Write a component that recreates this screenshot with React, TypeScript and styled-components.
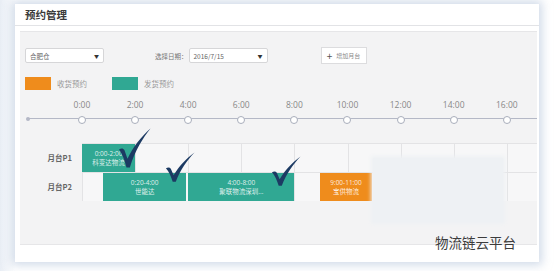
import React from "react";
import styled, { createGlobalStyle } from "styled-components";

const HOUR = 26.56;
const HOURS = ["0:00", "2:00", "4:00", "6:00", "8:00", "10:00", "12:00", "14:00", "16:00"];

interface Booking {
  start: number;
  end: number;
  time: string;
  name: string;
  kind: "in" | "out";
}

const docks: { name: string; bookings: Booking[] }[] = [
  {
    name: "月台P1",
    bookings: [{ start: 0, end: 2, time: "0:00-2:00", name: "科变达物流", kind: "out" }],
  },
  {
    name: "月台P2",
    bookings: [
      { start: 0.8, end: 3.92, time: "0:20-4:00", name: "世能达", kind: "out" },
      { start: 4, end: 8, time: "4:00-8:00", name: "聚联物流深圳...", kind: "out" },
      { start: 8.96, end: 10.92, time: "9:00-11:00", name: "宝供物流", kind: "in" },
    ],
  },
];

const checks = [
  { x: 118, y: 128, w: 33, h: 41 },
  { x: 165, y: 152, w: 30, h: 31 },
  { x: 271, y: 156, w: 30, h: 31 },
];

function Check({ x, y, w, h }: { x: number; y: number; w: number; h: number }) {
  return (
    <CheckMark style={{ left: x, top: y, width: w, height: h }} viewBox="0 0 32 40" preserveAspectRatio="none">
      <path d="M1 21 C3 19.5 5 19.5 6.2 21.5 L9.2 30 C15 18 22 9 31.5 0.5 C24 10 16.5 22 11.5 38.5 L8.2 38.5 C6.5 31.5 4.2 25.5 1 21 Z" />
    </CheckMark>
  );
}

export default function App() {
  return (
    <>
      <GlobalStyle />
      <Page>
        <Card>
          <TitleBar>预约管理</TitleBar>
          <Panel>
            <Toolbar>
              <Select width={79}>
                <span>合肥仓</span>
                <Arrow>▼</Arrow>
              </Select>
              <FieldLabel>选择日期：</FieldLabel>
              <Select width={79}>
                <span>2016/7/15</span>
                <Arrow>▼</Arrow>
              </Select>
              <AddButton>
                <Plus>+</Plus>增加月台
              </AddButton>
            </Toolbar>
            <Legend>
              <Swatch kind="in" />
              <LegendText>收货预约</LegendText>
              <Swatch kind="out" />
              <LegendText>发货预约</LegendText>
            </Legend>
            <Axis>
              {HOURS.map((h) => (
                <Tick key={h}>
                  <TickLabel>{h}</TickLabel>
                  <TickDot />
                </Tick>
              ))}
            </Axis>
            <Rows>
              {docks.map((dock) => (
                <Row key={dock.name}>
                  <DockName>{dock.name}</DockName>
                  <Track>
                    {HOURS.map((h) => (
                      <Cell key={h} />
                    ))}
                    {dock.bookings.map((b) => (
                      <Block
                        key={b.time}
                        kind={b.kind}
                        style={{ left: b.start * HOUR, width: (b.end - b.start) * HOUR }}
                      >
                        <span>{b.time}</span>
                        <span>{b.name}</span>
                      </Block>
                    ))}
                  </Track>
                </Row>
              ))}
            </Rows>
          </Panel>
        </Card>
        {checks.map((c, i) => (
          <Check key={i} {...c} />
        ))}
        <Haze />
        <Watermark>物流链云平台</Watermark>
      </Page>
    </>
  );
}

const GlobalStyle = createGlobalStyle`
  html, body {
    margin: 0;
    background: #ffffff;
  }
  body {
    font-family: "Open Sans", "Noto Sans CJK SC", sans-serif;
    color: #555;
  }
`;

const Page = styled.div`
  position: relative;
  width: 554px;
  height: 271px;
  padding: 4px 15px 0 15px;
  box-sizing: border-box;
  background: linear-gradient(90deg, #e9eef5 0px, #ffffff 16px);
  overflow: hidden;
`;

const Card = styled.div`
  display: flex;
  flex-direction: column;
  width: 524px;
  height: 258px;
  background: #ffffff;
  box-shadow: 0 0 9px 3px rgba(170, 188, 214, 0.55);
`;

const TitleBar = styled.div`
  display: flex;
  align-items: center;
  height: 21px;
  padding-left: 10px;
  border-bottom: 1px solid #e2e3e6;
  font-family: "Noto Sans CJK SC", sans-serif;
  font-size: 10.5px;
  font-weight: 700;
  color: #3a3a3a;
`;

const Panel = styled.div`
  display: flex;
  flex-direction: column;
  height: 214px;
  margin: 5px 2px 0 5px;
  background: #f3f3f4;
  border-top: 1px solid #e6e6e8;
  border-bottom: 1px solid #e6e6e8;
  box-sizing: border-box;
`;

const Toolbar = styled.div`
  display: flex;
  align-items: center;
  height: 17px;
  margin-top: 15px;
  padding-left: 5px;
`;

const Select = styled.div<{ width: number }>`
  display: flex;
  align-items: center;
  justify-content: space-between;
  width: ${(p) => p.width}px;
  height: 15px;
  padding: 0 4px;
  box-sizing: border-box;
  background: #fff;
  border: 1px solid #d6d6d8;
  border-radius: 2px;
  font-family: "Noto Sans CJK SC", sans-serif;
  font-size: 6.5px;
  color: #666;
`;

const Arrow = styled.span`
  font-size: 5px;
  color: #333;
`;

const FieldLabel = styled.span`
  margin-left: 51px;
  margin-right: 1px;
  font-family: "Noto Sans CJK SC", sans-serif;
  font-size: 6.5px;
  color: #777;
`;

const AddButton = styled.div`
  display: flex;
  align-items: center;
  justify-content: center;
  width: 46px;
  height: 17px;
  margin-left: 53px;
  box-sizing: border-box;
  background: #fff;
  border: 1px solid #dcdcde;
  font-family: "Noto Sans CJK SC", sans-serif;
  font-size: 6px;
  color: #888;
`;

const Plus = styled.span`
  margin-right: 4px;
  font-size: 10px;
  line-height: 1;
  color: #555;
`;

const Legend = styled.div`
  display: flex;
  align-items: center;
  height: 13px;
  margin-top: 13px;
  padding-left: 5px;
`;

const Swatch = styled.div<{ kind: "in" | "out" }>`
  width: 26px;
  height: 13px;
  background: ${(p) => (p.kind === "in" ? "#ef8c1c" : "#30a893")};
`;

const LegendText = styled.span`
  width: 55px;
  margin-left: 6px;
  font-family: "Noto Sans CJK SC", sans-serif;
  font-size: 7.5px;
  color: #999;
`;

const Axis = styled.div`
  position: relative;
  display: flex;
  margin-top: 9px;
  padding-left: 35.4px;
  &::before {
    content: "";
    position: absolute;
    left: 7px;
    right: 0;
    bottom: 5px;
    height: 1px;
    background: #b4b8c6;
  }
  &::after {
    content: "";
    position: absolute;
    left: 5.5px;
    bottom: 3.5px;
    width: 4px;
    height: 4px;
    border-radius: 50%;
    background: #b4b8c6;
  }
`;

const Tick = styled.div`
  display: flex;
  flex-direction: column;
  align-items: center;
  flex: 0 0 ${HOUR * 2}px;
  gap: 5px;
`;

const TickLabel = styled.span`
  font-size: 8.5px;
  line-height: 12px;
  color: #888;
`;

const TickDot = styled.div`
  position: relative;
  z-index: 1;
  width: 8px;
  height: 8px;
  box-sizing: border-box;
  border: 1.5px solid #a9aebb;
  border-radius: 50%;
  background: #fff;
`;

const Rows = styled.div`
  display: flex;
  flex-direction: column;
  margin-top: 19px;
`;

const Row = styled.div`
  display: flex;
  align-items: stretch;
  height: 29px;
`;

const DockName = styled.div`
  display: flex;
  align-items: center;
  justify-content: flex-end;
  flex: 0 0 62px;
  padding-right: 10px;
  box-sizing: border-box;
  font-family: "Noto Sans CJK SC", sans-serif;
  font-size: 7.5px;
  font-weight: 700;
  color: #666;
`;

const Track = styled.div`
  position: relative;
  display: flex;
  flex: 1;
  overflow: hidden;
  border-top: 1px solid #e3e3e5;
  background: #f7f7f8;
`;

const Cell = styled.div`
  flex: 0 0 ${HOUR * 2}px;
  box-sizing: border-box;
  border-left: 1px solid #e3e3e5;
`;

const Block = styled.div<{ kind: "in" | "out" }>`
  position: absolute;
  top: -1px;
  bottom: 0;
  display: flex;
  flex-direction: column;
  align-items: center;
  justify-content: center;
  background: ${(p) => (p.kind === "in" ? "#ef8c1c" : "#30a893")};
  font-family: "Open Sans", "Noto Sans CJK SC", sans-serif;
  font-size: 6.5px;
  line-height: 9px;
  color: rgba(255, 255, 255, 0.85);
  white-space: nowrap;
`;

const CheckMark = styled.svg`
  position: absolute;
  fill: #1c3a63;
`;

const Haze = styled.div`
  position: absolute;
  left: 373px;
  top: 158px;
  width: 130px;
  height: 64px;
  background: #eef1f4;
  box-shadow: 0 0 4px 2px #eef1f4;
`;

const Watermark = styled.div`
  position: absolute;
  left: 435px;
  top: 232px;
  font-family: "Noto Sans CJK SC", sans-serif;
  font-size: 13.5px;
  color: #3c3c3c;
`;
